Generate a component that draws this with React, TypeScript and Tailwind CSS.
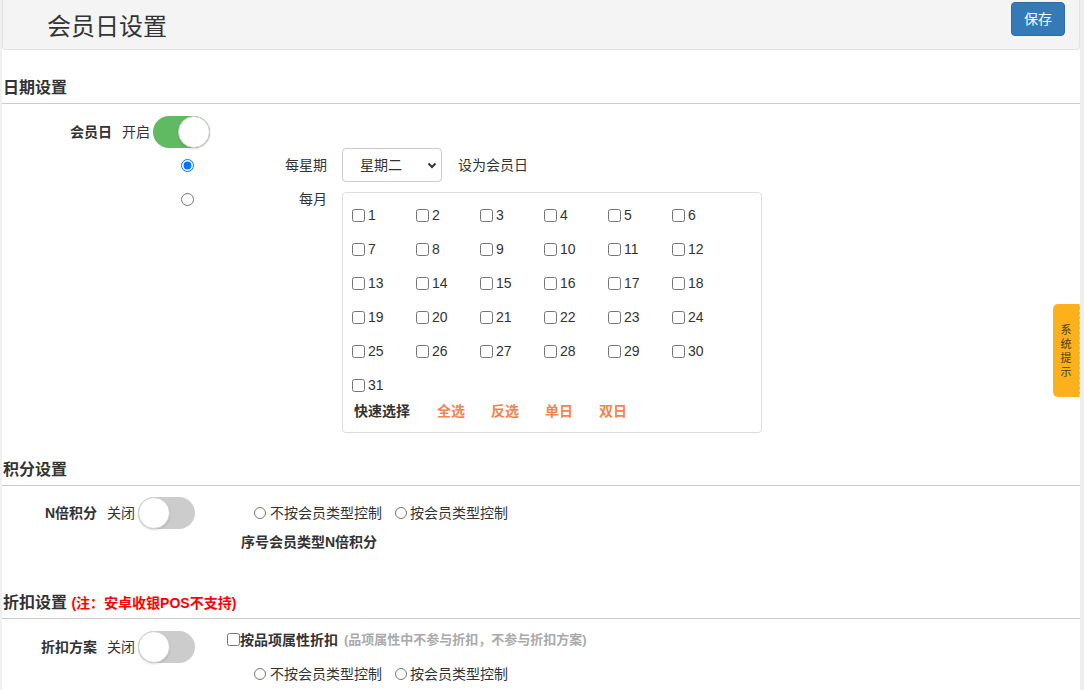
import React from 'react';

const FONT = { fontFamily: '"Liberation Sans", "Noto Sans CJK SC", sans-serif' };

const days = Array.from({ length: 31 }, (_, i) => i + 1);

// 开关
const Toggle = ({ on }: { on: boolean }) => (
  <div
    className={`relative w-[57px] h-[32px] rounded-full shrink-0 ${on ? 'bg-[#5fba62]' : 'bg-[#cccccc]'}`}
  >
    <div
      className={`absolute top-0 w-[32px] h-[32px] rounded-full bg-white border border-[#d0d0d0] shadow-[0_1px_2px_rgba(0,0,0,0.15)] ${on ? 'right-0' : 'left-0'}`}
    />
  </div>
);

const SectionTitle = ({ children }: { children: React.ReactNode }) => (
  <div className="pl-[1px] pb-[4px] border-b border-[#cccccc] text-[16px] leading-[22px] font-bold text-[#333]">
    {children}
  </div>
);

const TypeRadios = () => (
  <div className="flex items-center text-[14px] text-[#333]">
    <input type="radio" name="t" className="m-0 w-[12px] h-[12px]" />
    <span className="ml-[4px]">不按会员类型控制</span>
    <input type="radio" name="t" className="m-0 ml-[13px] w-[12px] h-[12px]" />
    <span className="ml-[3px]">按会员类型控制</span>
  </div>
);

export default function App() {
  return (
    <div className="relative w-full h-[690px] overflow-hidden flex bg-white text-[#333]" style={FONT}>
      <div className="flex-1 border-l-2 border-[#f0f0f0]">
        {/* 顶部标题栏 */}
        <div className="h-[50px] bg-[#f4f4f4] border-b border-r border-l border-[#e2e2e2] rounded-b-[4px] flex items-center justify-between pl-[44px] pr-[14px]">
          <div className="text-[24px] text-[#333] mt-[4px]">会员日设置</div>
          <button className="self-start mt-[2px] w-[54px] h-[34px] rounded-[4px] bg-[#337ab7] border border-[#2e6da4] text-white text-[14px]">
            保存
          </button>
        </div>

        {/* 日期设置 */}
        <div className="mt-[27px]">
          <SectionTitle>日期设置</SectionTitle>
        </div>
        <div className="mt-[12px] flex items-center h-[32px]">
          <div className="w-[110px] text-right text-[14px] font-bold">会员日</div>
          <div className="ml-[10px] text-[14px]">开启</div>
          <div className="ml-[3px]">
            <Toggle on />
          </div>
        </div>
        <div className="flex items-center h-[34px]">
          <input type="radio" name="d" defaultChecked className="m-0 ml-[179px] w-[13px] h-[13px]" />
          <div className="w-[133px] text-right text-[14px]">每星期</div>
          <div className="relative ml-[15px] w-[100px] h-[34px] border border-[#cccccc] rounded-[4px] flex items-center pl-[17px] text-[14px]">
            星期二
            <svg className="absolute right-[4px] top-[13px]" width="10" height="7" viewBox="0 0 10 7">
              <polyline points="1.5,1.5 5,5 8.5,1.5" fill="none" stroke="#333" strokeWidth="2" />
            </svg>
          </div>
          <div className="ml-[16px] text-[14px]">设为会员日</div>
        </div>
        <div className="mt-[10px] flex items-start">
          <input type="radio" name="d" className="m-0 mt-[1px] ml-[179px] w-[13px] h-[13px]" />
          <div className="w-[133px] text-right text-[14px] leading-[14px]">每月</div>
          <div className="ml-[15px] w-[420px] h-[241px] border border-[#dddddd] rounded-[4px] pl-[9px] pt-[5px]">
            <div className="grid grid-cols-[repeat(6,64px)]">
              {days.map(d => (
                <label key={d} className="h-[34px] flex items-center text-[14px]">
                  <input type="checkbox" className="m-0 w-[13px] h-[13px]" />
                  <span className="ml-[3px]">{d}</span>
                </label>
              ))}
            </div>
            <div className="flex items-center h-[18px] text-[14px] font-bold pl-[2px]">
              <span>快速选择</span>
              <span className="ml-[27px] text-[#f5834f]">全选</span>
              <span className="ml-[26px] text-[#f5834f]">反选</span>
              <span className="ml-[26px] text-[#f5834f]">单日</span>
              <span className="ml-[26px] text-[#f5834f]">双日</span>
            </div>
          </div>
        </div>

        {/* 积分设置 */}
        <div className="mt-[26px]">
          <SectionTitle>积分设置</SectionTitle>
        </div>
        <div className="mt-[11px] flex items-start">
          <div className="w-[95px] h-[32px] flex items-center justify-end text-[14px] font-bold">N倍积分</div>
          <div className="ml-[10px] h-[32px] flex items-center text-[14px]">关闭</div>
          <div className="ml-[3px]">
            <Toggle on={false} />
          </div>
          <div className="ml-[46px]">
            <div className="h-[32px] flex items-center pl-[13px]">
              <TypeRadios />
            </div>
            <div className="mt-[4px] text-[14px] leading-[18px] font-bold">序号会员类型N倍积分</div>
          </div>
        </div>

        {/* 折扣设置 */}
        <div className="mt-[41px]">
          <SectionTitle>
            折扣设置 <span className="text-[14px] text-[#ff0000]">(注：安卓收银POS不支持)</span>
          </SectionTitle>
        </div>
        <div className="mt-[12px] flex items-start">
          <div className="w-[95px] h-[32px] flex items-center justify-end text-[14px] font-bold">折扣方案</div>
          <div className="ml-[10px] h-[32px] flex items-center text-[14px]">关闭</div>
          <div className="ml-[3px]">
            <Toggle on={false} />
          </div>
          <div className="ml-[32px]">
            <div className="flex items-center h-[18px] text-[14px]">
              <input type="checkbox" className="m-0 -mt-[2px] w-[13px] h-[13px]" />
              <span className="font-bold">按品项属性折扣</span>
              <span className="ml-[6px] text-[13px] font-bold text-[#aaaaaa]">(品项属性中不参与折扣，不参与折扣方案)</span>
            </div>
            <div className="mt-[16px] h-[18px] flex items-center pl-[27px]">
              <TypeRadios />
            </div>
          </div>
        </div>
      </div>
      <div className="w-[4px] bg-[#eeeeee]" />

      {/* 系统提示 侧边标签 */}
      <div className="absolute left-[1053px] top-[304px] w-[27px] h-[93px] bg-[#fcb01c] rounded-l-[5px] border-r border-dashed border-[#f7d27c] flex flex-col items-center justify-center text-[11px] leading-[14px] text-[#4a3a10]">
        <span>系</span>
        <span>统</span>
        <span>提</span>
        <span>示</span>
      </div>
    </div>
  );
}
